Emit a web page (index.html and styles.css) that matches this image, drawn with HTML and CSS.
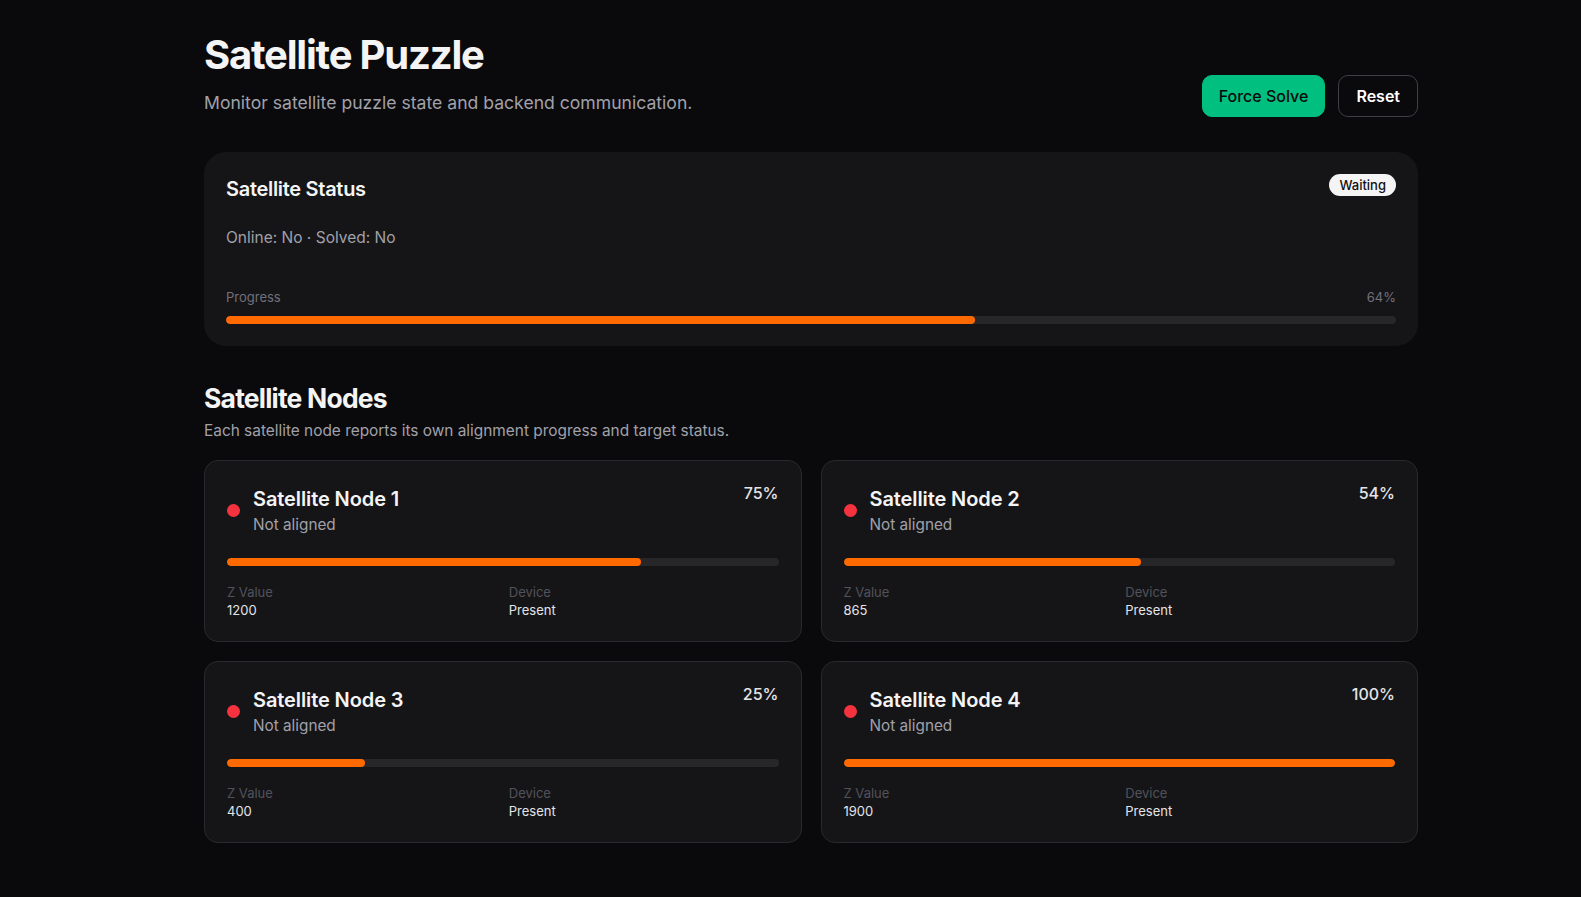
FILE: index.html
```html
<!DOCTYPE html>
<html lang="en">
<head>
  <meta charset="UTF-8">
  <title>Satellite Puzzle</title>
  <link rel="stylesheet" href="styles.css">
</head>
<body>

<div class="page">
  <header class="page-header">
    <div>
      <h1>Satellite Puzzle</h1>
      <p class="subtitle">Monitor satellite puzzle state and backend communication.</p>
    </div>
    <div class="actions">
      <button class="btn btn-solve">Force Solve</button>
      <button class="btn btn-reset">Reset</button>
    </div>
  </header>

  <section class="status-card">
    <div class="status-top">
      <h3>Satellite Status</h3>
      <span class="badge">Waiting</span>
    </div>
    <p class="status-line">Online: No · Solved: No</p>
    <div class="progress-head">
      <span>Progress</span>
      <span>64%</span>
    </div>
    <div class="track"><div class="fill" style="width: 64%"></div></div>
  </section>

  <h2>Satellite Nodes</h2>
  <p class="section-desc">Each satellite node reports its own alignment progress and target status.</p>

  <div class="node-grid">
    <div class="node">
      <div class="node-top">
        <span class="dot"></span>
        <div class="node-title">
          <h4>Satellite Node 1</h4>
          <div class="node-state">Not aligned</div>
        </div>
        <span class="node-pct">75%</span>
      </div>
      <div class="track"><div class="fill" style="width: 75%"></div></div>
      <div class="node-stats">
        <div><div class="stat-label">Z Value</div><div class="stat-value">1200</div></div>
        <div><div class="stat-label">Device</div><div class="stat-value">Present</div></div>
      </div>
    </div>

    <div class="node">
      <div class="node-top">
        <span class="dot"></span>
        <div class="node-title">
          <h4>Satellite Node 2</h4>
          <div class="node-state">Not aligned</div>
        </div>
        <span class="node-pct">54%</span>
      </div>
      <div class="track"><div class="fill" style="width: 54%"></div></div>
      <div class="node-stats">
        <div><div class="stat-label">Z Value</div><div class="stat-value">865</div></div>
        <div><div class="stat-label">Device</div><div class="stat-value">Present</div></div>
      </div>
    </div>

    <div class="node">
      <div class="node-top">
        <span class="dot"></span>
        <div class="node-title">
          <h4>Satellite Node 3</h4>
          <div class="node-state">Not aligned</div>
        </div>
        <span class="node-pct">25%</span>
      </div>
      <div class="track"><div class="fill" style="width: 25%"></div></div>
      <div class="node-stats">
        <div><div class="stat-label">Z Value</div><div class="stat-value">400</div></div>
        <div><div class="stat-label">Device</div><div class="stat-value">Present</div></div>
      </div>
    </div>

    <div class="node">
      <div class="node-top">
        <span class="dot"></span>
        <div class="node-title">
          <h4>Satellite Node 4</h4>
          <div class="node-state">Not aligned</div>
        </div>
        <span class="node-pct">100%</span>
      </div>
      <div class="track"><div class="fill" style="width: 100%"></div></div>
      <div class="node-stats">
        <div><div class="stat-label">Z Value</div><div class="stat-value">1900</div></div>
        <div><div class="stat-label">Device</div><div class="stat-value">Present</div></div>
      </div>
    </div>
  </div>
</div>

</body>
</html>
```

FILE: styles.css
```css
body {
  margin: 0;
  background: #0a0a0c;
  color: #f4f4f5;
  font-family: 'Inter', 'Noto Sans', sans-serif;
}
.page {
  padding: 31px 163px 40px 204px;
}
h1, h2, h3, h4, p {
  margin: 0;
}
.page-header {
  display: flex;
  justify-content: space-between;
  align-items: flex-end;
}
h1 {
  font-size: 40px;
  line-height: 48px;
  font-weight: 700;
  letter-spacing: -0.03em;
}
.subtitle {
  margin-top: 10px;
  font-size: 17.6px;
  line-height: 28px;
  color: #a1a1aa;
}
.actions {
  display: flex;
  gap: 13px;
}
.btn {
  height: 42px;
  padding: 0 17px;
  border-radius: 10px;
  font-family: inherit;
  font-size: 16px;
  font-weight: 600;
  cursor: pointer;
}
.btn-solve {
  background: #00bf7f;
  border: 1px solid #00bf7f;
  color: #0a0a0c;
  font-weight: 500;
  padding: 0 16px;
}
.btn-reset {
  background: #0a0a0c;
  border: 1px solid #3f3f46;
  color: #fff;
}

.status-card {
  margin-top: 35px;
  background: #151517;
  border-radius: 22px;
  padding: 22px;
}
.status-top {
  display: flex;
  justify-content: space-between;
  align-items: flex-start;
}
.status-top h3 {
  font-size: 20px;
  line-height: 28px;
  font-weight: 600;
  letter-spacing: -0.015em;
  margin-top: 1px;
}
.badge {
  background: #f4f4f5;
  color: #111113;
  font-size: 13px;
  line-height: 22px;
  padding: 0 10px;
  border-radius: 999px;
  font-weight: 500;
}
.status-line {
  margin-top: 23px;
  font-size: 15.5px;
  line-height: 24px;
  color: #a1a1aa;
}
.progress-head {
  margin-top: 38px;
  display: flex;
  justify-content: space-between;
  font-size: 13px;
  line-height: 18px;
  color: #71717a;
}
.track {
  margin-top: 10px;
  height: 8px;
  border-radius: 999px;
  background: #27272a;
  overflow: hidden;
}
.fill {
  height: 100%;
  background: #ff6a00;
  border-radius: 999px;
}

h2 {
  margin-top: 34px;
  font-size: 26.5px;
  line-height: 36px;
  font-weight: 700;
  letter-spacing: -0.03em;
}
.section-desc {
  margin-top: 4px;
  font-size: 15.4px;
  line-height: 22px;
  color: #a1a1aa;
}
.node-grid {
  margin-top: 18px;
  display: grid;
  grid-template-columns: 1fr 1fr;
  gap: 19px;
}
.node {
  background: #151517;
  border: 1px solid #2a2a2e;
  border-radius: 14px;
  padding: 22px;
}
.node-top {
  display: flex;
  align-items: center;
  gap: 13px;
  margin-bottom: 21px;
}
.dot {
  width: 13px;
  height: 13px;
  border-radius: 50%;
  background: #f5333f;
  flex-shrink: 0;
}
.node-title {
  flex: 1;
  padding-top: 2px;
}
.node-title h4 {
  font-size: 20px;
  line-height: 28px;
  font-weight: 600;
  letter-spacing: -0.005em;
}
.node-state {
  font-size: 15.3px;
  line-height: 24px;
  color: #a1a1aa;
}
.node-pct {
  align-self: flex-start;
  font-size: 16px;
  line-height: 20px;
  font-weight: 500;
  color: #e4e4e7;
}
.node .track {
  margin-top: 0;
}
.node-stats {
  margin-top: 17px;
  display: grid;
  grid-template-columns: 1fr 1fr;
  gap: 12px;
}
.stat-label {
  font-size: 13px;
  line-height: 18px;
  color: #52525b;
}
.stat-value {
  font-size: 13px;
  line-height: 18px;
  color: #e4e4e7;
}
```
